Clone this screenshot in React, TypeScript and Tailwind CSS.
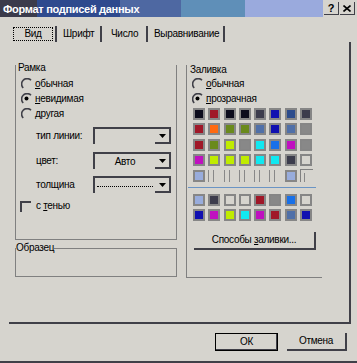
import React from "react";

const K = "#0c0c1c";
const R = "#a01828";
const DG = "#3c3c4c";
const B = "#1010b0";
const NB = "#2c4c8c";
const O = "#ff6a10";
const OL = "#6a8a1c";
const SB = "#5070a8";
const G = "#888888";
const L = "#c0ec00";
const C = "#10e8f0";
const BL = "#1870e8";
const M = "#c010c0";
const LB = "#98acdc";

// "" = empty swatch, "|" = line-only swatch, "#" = the odd sunken cell
const topRows = [
  [K, R, K, K, DG, B, NB, DG],
  [R, O, OL, OL, SB, B, SB, G],
  [R, OL, L, G, C, BL, M, G],
  [M, L, L, L, C, C, DG, ""],
  [LB, "|", "|", "|", "|", "|", LB, "#"],
];

const bottomRows = [
  [LB, DG, "", "", R, G, BL, ""],
  [B, M, L, C, M, R, SB, B],
];

const Radio = ({ checked }: { checked?: boolean }) => (
  <svg width="12" height="12" viewBox="0 0 12 12" className="shrink-0">
    <path d="M10 2.2 A5.3 5.3 0 0 0 2.2 10" fill="none" stroke="#404048" strokeWidth="1.6" />
    {checked && <circle cx="5.5" cy="5.5" r="2" fill="#000" />}
  </svg>
);

const Swatch = ({ c }: { c: string }) => {
  if (c === "|")
    return (
      <div className="w-[12px] h-[12px]">
        <div className="w-[6px] h-[12px] border-x border-[#888]" />
      </div>
    );
  if (c === "#")
    return (
      <div className="w-[13px] h-[13px] -mt-[1px] border-t border-l border-[#808080] pl-[3px] pt-[3px]">
        <div className="w-[1px] h-[9px] bg-[#888]" />
      </div>
    );
  return (
    <div
      className="w-[12px] h-[12px] border-2 border-[#868686]"
      style={{ backgroundColor: c || "#d6d4ce" }}
    />
  );
};

const Combo = ({ children }: { children?: React.ReactNode }) => (
  <div className="flex w-[78px] h-[17px] border-t-2 border-l-2 border-[#404048]">
    <div className="flex-1 flex items-center justify-center">{children}</div>
    <div className="w-[16px] flex items-center justify-center border-r-2 border-b-2 border-[#404048]">
      <svg width="7" height="4" viewBox="0 0 7 4">
        <polygon points="0,0 7,0 3.5,4" fill="#000" />
      </svg>
    </div>
  </div>
);

export default function App() {
  return (
    <div className="w-[357px] h-[363px] flex flex-col bg-[#d6d4ce] border-b-2 border-[#404048] text-[10px] leading-[12px] tracking-[-0.3px] text-black font-['Liberation_Sans','Arial',sans-serif] overflow-hidden">
      {/* title bar */}
      <div className="h-[17px] flex items-center shrink-0">
        <div className="w-[323px] h-[17px] flex items-center pl-[3px] bg-[linear-gradient(90deg,#3b3b4b_0_37px,#2e4a8e_37px_120px,#4e68a2_120px_181px,#5f8fb8_181px_245px,#9aaadd_245px)]">
          <span className="text-white font-bold text-[11px] tracking-[-0.3px]">
            Формат подписей данных
          </span>
        </div>
        <div className="flex gap-[1px] ml-[1px]">
          <div className="w-[15px] h-[13px] flex items-center justify-center border-r border-b border-[#404048] font-bold text-[11px]">
            ?
          </div>
          <div className="w-[15px] h-[13px] flex items-center justify-center border-r border-b border-[#404048]">
            <svg width="8" height="7" viewBox="0 0 8 7">
              <path d="M0.5 0.5 L7.5 6.5 M7.5 0.5 L0.5 6.5" stroke="#000" strokeWidth="1.6" />
            </svg>
          </div>
        </div>
      </div>

      {/* tabs */}
      <div className="flex h-[16px] mt-[9px] pl-[9px] shrink-0">
        <div className="w-[48px] pl-[4px] flex items-center border-r-2 border-[#404048]">
          <div className="w-[40px] h-[14px] border border-dotted border-black flex items-center justify-center">
            Вид
          </div>
        </div>
        <div className="w-[45px] pl-[6px] flex items-center border-r-2 border-[#404048]">Шрифт</div>
        <div className="w-[46px] pl-[9px] flex items-center border-r-2 border-[#404048]">Число</div>
        <div className="w-[77px] pl-[6px] flex items-center border-r-2 border-[#404048]">Выравнивание</div>
      </div>

      {/* tab panel */}
      <div className="ml-[9px] w-[342px] h-[282px] shrink-0 border-r-2 border-b-2 border-[#404048] flex gap-[9px] pt-[23px] pl-[6px]">
        {/* left column */}
        <div className="w-[162px] flex flex-col">
          <div className="h-[175px] border-x border-b border-[#808080] flex flex-col">
            <div className="-mt-[3px] pl-[2px]">Рамка</div>
            <div className="mt-[2px] pl-[5px] flex flex-col">
              <div className="h-[15px] flex items-center gap-[2px]">
                <Radio />
                <span><u>о</u>бычная</span>
              </div>
              <div className="h-[15px] flex items-center gap-[2px]">
                <Radio checked />
                <span><u>н</u>евидимая</span>
              </div>
              <div className="h-[15px] flex items-center gap-[2px]">
                <Radio />
                <span><u>д</u>ругая</span>
              </div>
            </div>
            <div className="mt-[6px] flex items-center pl-[20px]">
              <span className="w-[57px]">тип линии:</span>
              <Combo />
            </div>
            <div className="mt-[8px] flex items-center pl-[20px]">
              <span className="w-[57px]">цвет:</span>
              <Combo>Авто</Combo>
            </div>
            <div className="mt-[7px] flex items-center pl-[20px]">
              <span className="w-[57px]">толщина</span>
              <Combo>
                <div className="w-[56px] border-t border-dotted border-black mt-[1px]" />
              </Combo>
            </div>
            <div className="mt-[7px] h-[12px] flex items-center pl-[4px] gap-[5px]">
              <div className="w-[11px] h-[11px] border-t-2 border-l-2 border-[#404048]" />
              <span>с <u>т</u>енью</span>
            </div>
          </div>
          <fieldset className="mt-[2px] h-[35px] border border-[#808080]">
            <legend className="leading-[12px]">Образец</legend>
          </fieldset>
        </div>

        {/* right column */}
        <div className="w-[136px] h-[213px] border-l border-b border-[#808080] flex flex-col">
          <div className="-mt-[1px] pl-[3px]">Заливка</div>
          <div className="pl-[5px] flex flex-col">
            <div className="h-[15px] flex items-center gap-[2px]">
              <Radio />
              <span><u>о</u>бычная</span>
            </div>
            <div className="h-[15px] flex items-center gap-[2px]">
              <Radio checked />
              <span><u>п</u>розрачная</span>
            </div>
          </div>
          <div className="ml-[6px] mt-[2px] grid grid-cols-[repeat(8,12px)] gap-x-[3.3px] gap-y-[3.4px] w-fit">
            {topRows.flat().map((c, i) => (
              <Swatch key={i} c={c} />
            ))}
          </div>
          <div className="ml-[1px] mt-[5px] w-[128px] h-[1px] bg-[#6a94c4]" />
          <div className="ml-[6px] mt-[6px] grid grid-cols-[repeat(8,12px)] gap-x-[3.3px] gap-y-[3.4px] w-fit">
            {bottomRows.flat().map((c, i) => (
              <Swatch key={i} c={c} />
            ))}
          </div>
          <div className="ml-[7px] mt-[11px] w-[122px] h-[18px] border-r-2 border-b-2 border-[#404048] flex items-center justify-center">
            <span>
              Способы <u>з</u>аливки...
            </span>
          </div>
        </div>
      </div>

      {/* buttons */}
      <div className="mt-[9px] flex justify-end gap-[9px] pr-[10px]">
        <div className="w-[63px] h-[18px] border border-black shadow-[inset_-1px_-1px_0_#404048] flex items-center justify-center">
          ОК
        </div>
        <div className="w-[60px] h-[18px] border-r-2 border-b-2 border-[#404048] flex items-center justify-center">
          Отмена
        </div>
      </div>
    </div>
  );
}
